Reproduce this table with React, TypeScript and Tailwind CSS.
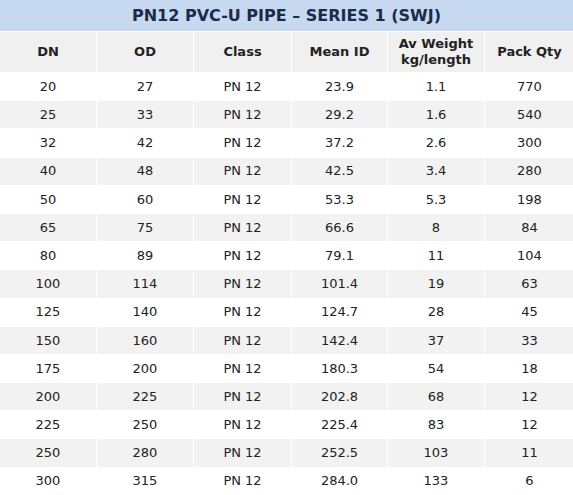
const rows = [
  ["20", "27", "PN 12", "23.9", "1.1", "770"],
  ["25", "33", "PN 12", "29.2", "1.6", "540"],
  ["32", "42", "PN 12", "37.2", "2.6", "300"],
  ["40", "48", "PN 12", "42.5", "3.4", "280"],
  ["50", "60", "PN 12", "53.3", "5.3", "198"],
  ["65", "75", "PN 12", "66.6", "8", "84"],
  ["80", "89", "PN 12", "79.1", "11", "104"],
  ["100", "114", "PN 12", "101.4", "19", "63"],
  ["125", "140", "PN 12", "124.7", "28", "45"],
  ["150", "160", "PN 12", "142.4", "37", "33"],
  ["175", "200", "PN 12", "180.3", "54", "18"],
  ["200", "225", "PN 12", "202.8", "68", "12"],
  ["225", "250", "PN 12", "225.4", "83", "12"],
  ["250", "280", "PN 12", "252.5", "103", "11"],
  ["300", "315", "PN 12", "284.0", "133", "6"],
];

const cols = "grid grid-cols-[96px_96px_97px_95px_96px_89px] gap-x-px";

export default function App() {
  return (
    <div className="w-[573px] bg-white text-[13px] text-[#222] font-['DejaVu_Sans',Verdana,sans-serif]">
      <div className="h-[31px] bg-[#c6d9f1] flex items-center justify-center text-[16px] font-bold text-[#1c2b4a]">
        PN12 PVC-U PIPE – SERIES 1 (SWJ)
      </div>
      <div className={`${cols} mt-px h-[40px] font-bold leading-[16px]`}>
        {["DN", "OD", "Class", "Mean ID", "Av Weight kg/length", "Pack Qty"].map((h) => (
          <div key={h} className="bg-[#f0f0f0] flex items-center justify-center text-center px-1">
            {h === "Av Weight kg/length" ? (
              <span>
                Av Weight
                <br />
                kg/length
              </span>
            ) : (
              h
            )}
          </div>
        ))}
      </div>
      {rows.map((r, i) => (
        <div key={i} className={`${cols} mt-px h-[27.2px]`}>
          {r.map((c, j) => (
            <div
              key={j}
              className={`flex items-center justify-center ${i % 2 === 1 ? "bg-[#f2f2f2]" : "bg-white"}`}
            >
              {c}
            </div>
          ))}
        </div>
      ))}
    </div>
  );
}
